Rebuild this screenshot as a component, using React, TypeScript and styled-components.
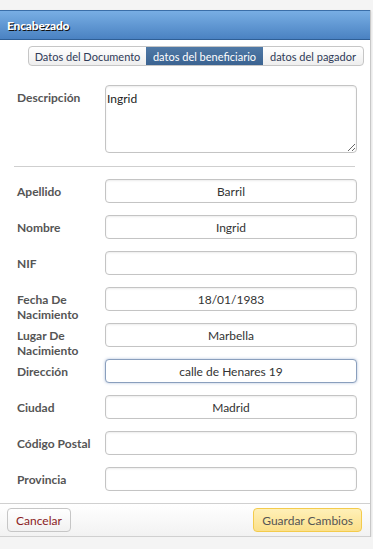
import styled, { createGlobalStyle, css } from 'styled-components';

const GlobalStyle = createGlobalStyle`
  html, body {
    margin: 0;
    padding: 0;
    background: #f4f4f4;
  }
  body {
    font-family: Lato, "Open Sans", sans-serif;
    font-size: 12px;
    color: #333;
  }
`;

const Dialog = styled.div`
  width: 371px;
  margin-top: 10px;
  box-sizing: border-box;
  border-right: 1px solid #c8c8c8;
  background: #fff;
  box-shadow: 0 1px 2px rgba(0, 0, 0, 0.12);
`;

const Header = styled.div`
  height: 30px;
  box-sizing: border-box;
  display: flex;
  align-items: center;
  padding: 0 7px;
  border-top: 1px solid #3a6ea8;
  border-bottom: 1px solid #2f5f96;
  background: linear-gradient(#78aee4, #4a82c2);
  color: #fff;
  font-weight: 900;
  font-size: 12px;
  letter-spacing: -0.2px;
  text-shadow: 1px 1px 0 #111;
`;

const TabBar = styled.div`
  display: flex;
  justify-content: flex-end;
  padding: 6px 6px 0 0;
`;

const TabGroup = styled.div`
  display: flex;
  border: 1px solid #c6c6c6;
  border-radius: 4px;
  overflow: hidden;
  background: linear-gradient(#fff, #eee);
`;

interface TabProps {
  active?: boolean;
  w: number;
}

const Tab = styled.div<TabProps>`
  width: ${p => p.w}px;
  height: 18px;
  display: flex;
  align-items: center;
  justify-content: center;
  font-size: 11px;
  white-space: nowrap;
  color: #2f3a58;
  ${p => p.active && css`
    background: linear-gradient(#4f79a6, #3b6391);
    color: #fff;
  `}
`;

const Body = styled.div`
  padding: 19px 14px 0 17px;
`;

const Row = styled.div`
  display: grid;
  grid-template-columns: 88px 252px;
  height: 24px;
  margin-bottom: 12px;
`;

const TallRow = styled(Row)`
  height: 68px;
  margin-bottom: 0;
`;

const Label = styled.div`
  font-weight: bold;
  font-size: 12px;
  line-height: 15px;
  padding-top: 5px;
  color: #555;
`;

const Input = styled.input<{ focused?: boolean }>`
  width: 100%;
  height: 24px;
  box-sizing: border-box;
  border: 1px solid #c4c4c4;
  border-radius: 4px;
  box-shadow: inset 0 1px 2px rgba(0, 0, 0, 0.08);
  font-family: Lato, "Open Sans", sans-serif;
  font-size: 12px;
  color: #333;
  text-align: center;
  outline: none;
  padding: 0 4px;
  ${p => p.focused && css`
    border-color: #8a9fbd;
    box-shadow: 0 0 3px rgba(70, 110, 170, 0.45);
  `}
`;

const TextArea = styled.textarea`
  display: block;
  width: 100%;
  height: 68px;
  box-sizing: border-box;
  border: 1px solid #c4c4c4;
  border-radius: 4px;
  box-shadow: inset 0 1px 2px rgba(0, 0, 0, 0.08);
  font-family: Lato, "Open Sans", sans-serif;
  font-size: 12px;
  color: #222;
  padding: 5px 1px;
  outline: none;
`;

const Divider = styled.hr`
  border: none;
  border-top: 1px solid #cfcfcf;
  margin: 13px 2px 12px -3px;
  width: 341px;
`;

const Footer = styled.div`
  display: flex;
  justify-content: space-between;
  align-items: center;
  padding: 4px 8px 4px 7px;
  border-top: 1px solid #d0d0d0;
  border-bottom: 1px solid #d0d0d0;
  background: linear-gradient(#fff, #f2f2f2);
`;

const Button = styled.button<{ primary?: boolean }>`
  height: 24px;
  padding: 0 8px;
  border-radius: 4px;
  font-family: Lato, "Open Sans", sans-serif;
  font-size: 12px;
  border: 1px solid #c6c6c6;
  background: linear-gradient(#fff, #f1f1f1);
  color: #8b1c24;
  ${p => p.primary && css`
    border-color: #f3cb4c;
    background: linear-gradient(#fff0b8, #fbe08a);
    color: #555;
  `}
`;

const fields: { label: string; value: string; focused?: boolean }[] = [
  { label: 'Apellido', value: 'Barril' },
  { label: 'Nombre', value: 'Ingrid' },
  { label: 'NIF', value: '' },
  { label: 'Fecha De Nacimiento', value: '18/01/1983' },
  { label: 'Lugar De Nacimiento', value: 'Marbella' },
  { label: 'Dirección', value: 'calle de Henares 19', focused: true },
  { label: 'Ciudad', value: 'Madrid' },
  { label: 'Código Postal', value: '' },
  { label: 'Provincia', value: '' },
];

export default function App() {
  return (
    <>
      <GlobalStyle />
      <Dialog>
        <Header>Encabezado</Header>
        <TabBar>
          <TabGroup>
            <Tab w={117}>Datos del Documento</Tab>
            <Tab w={117} active>datos del beneficiario</Tab>
            <Tab w={100}>datos del pagador</Tab>
          </TabGroup>
        </TabBar>
        <Body>
          <TallRow>
            <Label>Descripción</Label>
            <TextArea defaultValue="Ingrid" />
          </TallRow>
          <Divider />
          {fields.map(f => (
            <Row key={f.label}>
              <Label>{f.label}</Label>
              <Input defaultValue={f.value} focused={f.focused} />
            </Row>
          ))}
        </Body>
        <Footer>
          <Button>Cancelar</Button>
          <Button primary>Guardar Cambios</Button>
        </Footer>
      </Dialog>
    </>
  );
}
